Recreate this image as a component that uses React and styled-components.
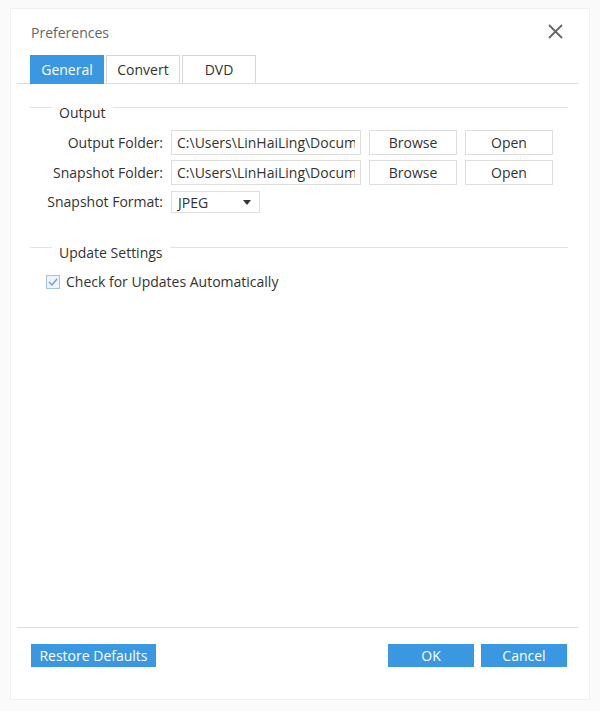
import React from 'react'
import styled, { createGlobalStyle } from 'styled-components';

const GlobalStyle = createGlobalStyle`
  html, body {
    margin: 0;
    background: #fafafa;
  }
  body {
    font-family: "Open Sans", "Noto Sans", sans-serif;
    color: #3c3c3c;
  }
`

const rows = [
  { label: 'Output Folder:', path: 'C:\\Users\\LinHaiLing\\Documents\\Video Converter Ultimate\\Output' },
  { label: 'Snapshot Folder:', path: 'C:\\Users\\LinHaiLing\\Documents\\Video Converter Ultimate\\Snapshot' },
];

const App = () => {
  return (
    <Frame>
      <GlobalStyle />
      <Dialog>
        <TitleBar>
          <Title>Preferences</Title>
          <Close aria-label="close">
            <svg width="15" height="15" viewBox="0 0 15 15">
              <path d="M1 1 L14 14 M14 1 L1 14" stroke="#666" strokeWidth="1.8" fill="none" />
            </svg>
          </Close>
        </TitleBar>
        <TabBar>
          <Tab $active>General</Tab>
          <Tab>Convert</Tab>
          <Tab>DVD</Tab>
        </TabBar>
        <Body>
          <GroupHeader>
            <Line $lead />
            <span>Output</span>
            <Line />
          </GroupHeader>
          <Form>
            {rows.map((r) => (
              <React.Fragment key={r.label}>
                <Label>{r.label}</Label>
                <PathInput readOnly value={r.path} />
                <GhostButton>Browse</GhostButton>
                <GhostButton>Open</GhostButton>
              </React.Fragment>
            ))}
            <Label>Snapshot Format:</Label>
            <Select>
              <span>JPEG</span>
              <Caret />
            </Select>
          </Form>
          <GroupHeader $spaced>
            <Line $lead />
            <span>Update Settings</span>
            <Line />
          </GroupHeader>
          <CheckRow>
            <Box>
              <svg width="10" height="8" viewBox="0 0 10 8">
                <path d="M1 4 L4 7 L9 1" stroke="#6f9fc8" strokeWidth="1.4" fill="none" />
              </svg>
            </Box>
            Check for Updates Automatically
          </CheckRow>
        </Body>
        <Footer>
          <BlueButton $wide>Restore Defaults</BlueButton>
          <Actions>
            <BlueButton>OK</BlueButton>
            <BlueButton>Cancel</BlueButton>
          </Actions>
        </Footer>
      </Dialog>
    </Frame>
  )
}
export default App;

const Frame = styled.div`
  box-sizing: border-box;
  height: 711px;
  padding: 8px 10px 11px;
`
const Dialog = styled.div`
  box-sizing: border-box;
  height: 100%;
  background: #fff;
  border: 1px solid #efefef;
  display: flex;
  flex-direction: column;
`
const TitleBar = styled.div`
  height: 46px;
  box-sizing: border-box;
  padding: 13px 26px 0 20px;
  display: flex;
  justify-content: space-between;
  align-items: flex-start;
`
const Title = styled.div`
  font-size: 14px;
  line-height: 22px;
  color: #666;
`
const Close = styled.div`
  margin-top: 2px;
  display: flex;
`
const TabBar = styled.div`
  display: flex;
  gap: 2px;
  margin: 0 11px 0 6px;
  padding-left: 13px;
  border-bottom: 1px solid #dcdcdc;
`
const Tab = styled.div`
  box-sizing: border-box;
  width: 74px;
  height: 29px;
  margin-bottom: -1px;
  display: flex;
  align-items: center;
  justify-content: center;
  font-size: 14px;
  color: ${(p) => (p.$active ? '#fff' : '#333')};
  background: ${(p) => (p.$active ? '#3a98e2' : '#fff')};
  border: 1px solid ${(p) => (p.$active ? '#3a98e2' : '#d6d6d6')};
  border-bottom-color: ${(p) => (p.$active ? '#3a98e2' : '#dcdcdc')};
`
const Body = styled.div`
  flex: 1;
  padding: 18px 21px 0 19px;
`
const GroupHeader = styled.div`
  display: flex;
  align-items: flex-start;
  height: 20px;
  margin-top: ${(p) => (p.$spaced ? '29px' : '0')};
  span {
    font-size: 14px;
    line-height: 21px;
    padding: 0 7px;
    color: #333;
  }
`
const Line = styled.div`
  margin-top: 5px;
  height: 1px;
  background: #e2e2e2;
  ${(p) => (p.$lead ? 'width: 22px;' : 'flex: 1;')}
`
const Form = styled.div`
  margin-top: 8px;
  display: grid;
  grid-template-columns: 133px 190px 88px 88px;
  column-gap: 8px;
  row-gap: 5px;
  align-items: center;
`
const Label = styled.div`
  text-align: right;
  font-size: 14px;
  color: #333;
  white-space: nowrap;
`
const PathInput = styled.input`
  box-sizing: border-box;
  width: 100%;
  height: 25px;
  margin: 0;
  padding: 0 5px;
  border: 1px solid #dedede;
  outline: none;
  font-family: inherit;
  font-size: 14px;
  color: #333;
  background: #fff;
`
const GhostButton = styled.div`
  box-sizing: border-box;
  height: 25px;
  border: 1px solid #dedede;
  display: flex;
  align-items: center;
  justify-content: center;
  font-size: 14px;
  color: #333;
  background: #fff;
`
const Select = styled.div`
  box-sizing: border-box;
  width: 89px;
  height: 22px;
  margin-top: 1px;
  border: 1px solid #dedede;
  display: flex;
  align-items: center;
  justify-content: space-between;
  padding: 0 8px 0 6px;
  font-size: 14px;
  color: #333;
`
const Caret = styled.span`
  width: 0;
  height: 0;
  border-left: 4px solid transparent;
  border-right: 4px solid transparent;
  border-top: 5px solid #333;
`
const CheckRow = styled.div`
  margin-top: 10px;
  padding-left: 16px;
  display: flex;
  align-items: center;
  gap: 6px;
  font-size: 14px;
  color: #333;
`
const Box = styled.span`
  box-sizing: border-box;
  width: 14px;
  height: 14px;
  border: 1px solid #a9c3da;
  background: #eef4fa;
  display: flex;
  align-items: center;
  justify-content: center;
`
const Footer = styled.div`
  margin: 0 11px 32px 6px;
  border-top: 1px solid #dcdcdc;
  padding: 16px 11px 0 14px;
  display: flex;
  justify-content: space-between;
`
const Actions = styled.div`
  display: flex;
  gap: 7px;
`
const BlueButton = styled.div`
  box-sizing: border-box;
  height: 23px;
  width: ${(p) => (p.$wide ? '125px' : '86px')};
  background: #3a98e2;
  color: #fff;
  font-size: 14px;
  display: flex;
  align-items: center;
  justify-content: center;
`
